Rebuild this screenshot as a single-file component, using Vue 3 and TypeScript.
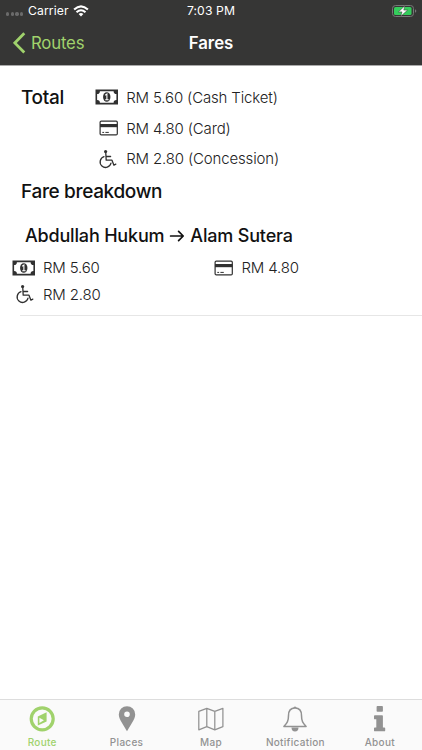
<script setup lang="ts">
import { defineComponent, h } from 'vue'

type FareKind = 'cash' | 'card' | 'concession'
interface Fare { kind: FareKind; amount: string; label?: string }
interface Tab { id: string; label: string }

const totals: Fare[] = [
  { kind: 'cash', amount: 'RM 5.60', label: '(Cash Ticket)' },
  { kind: 'card', amount: 'RM 4.80', label: '(Card)' },
  { kind: 'concession', amount: 'RM 2.80', label: '(Concession)' },
]
const breakdown: Fare[] = [
  { kind: 'cash', amount: 'RM 5.60' },
  { kind: 'card', amount: 'RM 4.80' },
  { kind: 'concession', amount: 'RM 2.80' },
]
const tabs: Tab[] = [
  { id: 'route', label: 'Route' },
  { id: 'places', label: 'Places' },
  { id: 'map', label: 'Map' },
  { id: 'notification', label: 'Notification' },
  { id: 'about', label: 'About' },
]

const FareIcon = defineComponent({
  props: { kind: { type: String, required: true } },
  setup(props) {
    return () => {
      const line = { fill: 'none', stroke: '#303030', 'stroke-linecap': 'round', 'stroke-linejoin': 'round' }
      const art = props.kind === 'cash'
        ? [
            h('path', { fill: '#303030', 'fill-rule': 'evenodd', d: 'M.5 2.5H23V17.5H.5ZM4.9 4.3A2.8 2.8 0 0 1 2.1 7.1V12.9A2.8 2.8 0 0 1 4.9 15.7H18.6A2.8 2.8 0 0 1 21.4 12.9V7.1A2.8 2.8 0 0 1 18.6 4.3Z' }),
            h('ellipse', { cx: 11.75, cy: 10, rx: 3.7, ry: 4.8, fill: '#303030' }),
            h('path', { d: 'M10.2 8.2 11.9 7V12.7M10.2 12.8H13.6', fill: 'none', stroke: '#fff', 'stroke-width': 1.1 }),
          ]
        : props.kind === 'card'
          ? [
              h('rect', { ...line, x: 5.1, y: 3.1, width: 17.2, height: 13.8, rx: 1.2, 'stroke-width': 1.2 }),
              h('path', { d: 'M5 6H22.5V9.2H5Z', fill: '#303030' }),
              h('path', { d: 'M7.3 14.4H9.1M10.4 14.4H13.8', fill: 'none', stroke: '#303030', 'stroke-width': 1 }),
            ]
          : [
              h('circle', { cx: 10.6, cy: 2.6, r: 1.6, fill: '#303030' }),
              h('path', { ...line, 'stroke-width': 1.3, d: 'M10.8 4.3 11.2 11.2H17L18.9 16.2 20.8 15.1M11 7.5H15.6M9 7.7A5.5 5.5 0 1 0 16 14.2' }),
            ]
      return h('svg', { viewBox: '0 0 24 20', width: 24, height: 20, 'aria-hidden': 'true' }, art)
    }
  },
})
</script>

<template>
  <div class="screen">
    <header class="top">
      <div class="status">
        <div class="carrier">
          <span class="dots"><i v-for="n in 4" :key="n" /></span>
          <span class="carrier-name">Carrier</span>
          <svg class="wifi" width="16" height="12" viewBox="0 0 16 12">
            <g fill="none" stroke="#fff" stroke-width="2.1">
              <path d="M1.1 4.6Q8-1.8 14.9 4.6" />
              <path d="M3.5 7.3Q8 3.2 12.5 7.3" />
            </g>
            <path d="M5.6 8.9Q8 7 10.4 8.9L8 11.5Z" fill="#fff" />
          </svg>
        </div>
        <span class="time">7:03 PM</span>
        <svg class="battery" width="25" height="12" viewBox="0 0 25 12">
          <rect x=".5" y=".5" width="21" height="11" rx="3" fill="none" stroke="#777" />
          <rect x="2" y="2" width="17.5" height="8" rx="1.5" fill="#35cd5c" />
          <path d="M23 4.2V7.8Q24.3 7.2 24.3 6T23 4.2Z" fill="#777" />
          <path d="M12.8 .8 6.4 6.9H10L8.8 11.3 15.6 5.1H11.8Z" fill="#fff" stroke="#363635" stroke-width=".5" />
        </svg>
      </div>
      <nav class="navbar">
        <a class="back">
          <svg width="13" height="22" viewBox="0 0 13 22"><path d="M11.3 1.3 1.8 10.9 11.3 20.4" fill="none" stroke="#a0d26c" stroke-width="2.8" /></svg>
          <span>Routes</span>
        </a>
        <h1>Fares</h1>
      </nav>
    </header>

    <main>
      <section class="total">
        <h2 class="total-title">Total</h2>
        <ul class="total-list">
          <li v-for="fare in totals" :key="fare.kind" class="fare">
            <FareIcon :kind="fare.kind" />
            <span>{{ fare.amount }} {{ fare.label }}</span>
          </li>
        </ul>
      </section>
      <h2 class="breakdown-title">Fare breakdown</h2>
      <section class="leg">
        <h3>
          <span>Abdullah Hukum</span>
          <svg width="16" height="14" viewBox="0 0 16 14"><path d="M1.6 7H14M9.6 2.4 14.2 7 9.6 11.6" fill="none" stroke="#111" stroke-width="1.7" stroke-linecap="round" stroke-linejoin="round" /></svg>
          <span>Alam Sutera</span>
        </h3>
        <ul class="leg-fares">
          <li v-for="fare in breakdown" :key="fare.kind" class="fare">
            <FareIcon :kind="fare.kind" />
            <span>{{ fare.amount }}</span>
          </li>
        </ul>
      </section>
    </main>

    <footer class="tabs">
      <a v-for="(tab, index) in tabs" :key="tab.id" class="tab" :class="{ active: index === 0 }">
        <svg width="28" height="28" viewBox="0 0 28 28">
          <template v-if="tab.id === 'route'">
            <circle cx="14.2" cy="13.8" r="11" fill="none" stroke="currentColor" stroke-width="3.2" />
            <path fill="currentColor" fill-rule="evenodd" d="M18.6 7.3V16.5L9.8 20.6V11.5ZM11.4 12.8V18L15.9 15.3Z" />
          </template>
          <path v-else-if="tab.id === 'places'" fill="currentColor" fill-rule="evenodd" d="M14 1.2A8.2 8.2 0 0 0 5.8 9.4C5.8 14.3 11 20.4 14 26.3 17 20.4 22.2 14.3 22.2 9.4A8.2 8.2 0 0 0 14 1.2ZM14 6.4A2.8 2.8 0 1 1 14 12 2.8 2.8 0 0 1 14 6.4Z" />
          <path v-else-if="tab.id === 'map'" fill="none" stroke="currentColor" stroke-width="1.25" stroke-linejoin="round" d="M1.8 6.4 9.8 3.3 17.8 6.4 25.9 3.3V21.7L17.8 24.8 9.8 21.7 1.8 24.8ZM9.8 3.3V21.7M17.8 6.4V24.8" />
          <template v-else-if="tab.id === 'notification'">
            <path d="M14 3C9.5 3 7.5 6.3 7.5 10.5 7.5 16.8 5.8 18.3 2.9 21.4H25.1C22.2 18.3 20.5 16.8 20.5 10.5 20.5 6.3 18.5 3 14 3Z" fill="none" stroke="currentColor" stroke-width="1.5" stroke-linejoin="round" />
            <path d="M12.4 3A1.6 1.6 0 0 1 15.6 3ZM10.5 22.4H17.5A3.5 4 0 0 1 10.5 22.4Z" fill="currentColor" />
          </template>
          <path v-else fill="currentColor" d="M11.4 1.1H16.1Q16.9 1.1 16.9 1.9V5.9Q16.9 6.7 16.1 6.7H11.4Q10.6 6.7 10.6 5.9V1.9Q10.6 1.1 11.4 1.1ZM8.9 10.2H16.1Q16.9 10.2 16.9 11V22.4H18.3Q19.2 22.4 19.2 23.3V25.4Q19.2 26.3 18.3 26.3H8.9Q8 26.3 8 25.4V23.3Q8 22.4 8.9 22.4H10.3V14.3H8.9Q8 14.3 8 13.4V11.1Q8 10.2 8.9 10.2Z" />
        </svg>
        <span>{{ tab.label }}</span>
      </a>
    </footer>
  </div>
</template>

<style>
body { margin: 0; background: #fff; }
</style>

<style scoped>
.screen { display: flex; flex-direction: column; width: 422px; height: 750px; overflow: hidden; background: #fff; color: #111; font-family: Inter, "Liberation Sans", sans-serif; }
h1, h2, h3, ul { margin: 0; padding: 0; font-weight: 500; list-style: none; }
svg { display: block; flex: none; }
.top { height: 65px; background: #363635; border-bottom: 1px solid #aaa; box-sizing: content-box; flex: none; }
.status { display: grid; grid-template-columns: 1fr auto 1fr; align-items: center; height: 21px; color: #fff; font-size: 12.2px; line-height: 21px; letter-spacing: .1px; }
.carrier { display: flex; align-items: center; padding-left: 6px; }
.dots { display: flex; gap: 1.4px; padding-top: 7px; width: 22px; }
.dots i { width: 3.3px; height: 3.3px; border-radius: 50%; background: #6b6b6b; }
.wifi { margin-left: 4px; }
.battery { justify-self: end; margin-right: 5px; }
.navbar { display: grid; grid-template-columns: 1fr auto 1fr; align-items: center; height: 44px; }
.back { display: flex; align-items: center; gap: 5px; padding-left: 13px; color: #a0d26c; font-size: 16.8px; letter-spacing: -.2px; }
h1 { color: #fff; font-size: 16.8px; font-weight: 600; }
main { flex: 1; padding-top: 16px; }
.total { display: flex; }
.total-title { width: 74px; padding-left: 21px; font-size: 19px; line-height: 32px; letter-spacing: -.32px; }
.total-list .fare { height: 30.7px; }
.fare { display: flex; align-items: center; gap: 7.2px; color: #222; font-size: 15px; font-weight: 300; letter-spacing: -.15px; white-space: nowrap; }
.breakdown-title { padding: 1px 0 0 21px; font-size: 19px; line-height: 33px; letter-spacing: -.34px; }
.leg { margin-left: 20px; padding-top: 14px; height: 93px; border-bottom: 1px solid #e6e6e6; }
h3 { display: flex; align-items: center; gap: 5px; margin-left: 5px; font-size: 18px; line-height: 28px; letter-spacing: -.18px; }
.leg-fares { display: grid; grid-template-columns: 198.5px 1fr; grid-auto-rows: 26.5px; margin: 4.5px 0 0 -8.3px; }
.tabs { display: grid; grid-template-columns: repeat(5, 1fr); flex: none; height: 50px; border-top: 1px solid #ddd; background: #fafafa; }
.tab { display: flex; flex-direction: column; align-items: center; padding-top: 5px; color: #929292; font-size: 10px; font-weight: 500; line-height: 18px; letter-spacing: .3px; }
.tab.active { color: #a0d26c; }
</style>
